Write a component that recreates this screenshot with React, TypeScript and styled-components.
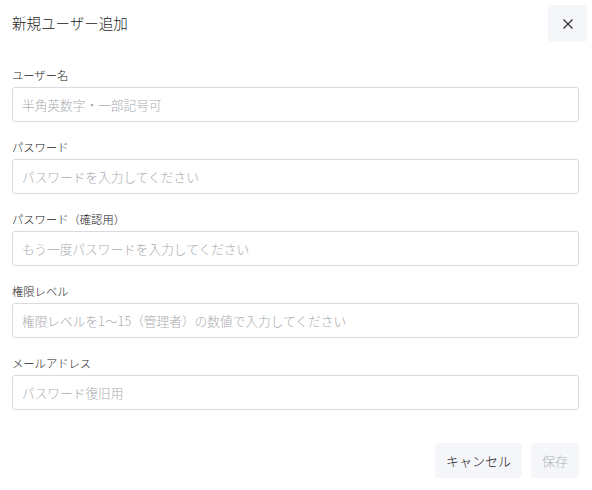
import styled, { createGlobalStyle } from "styled-components";

const GlobalStyle = createGlobalStyle`
  body {
    margin: 0;
    background: #ffffff;
    font-family: "Noto Sans CJK JP", "Noto Sans", sans-serif;
    font-weight: 300;
    color: #222;
  }
`;

const fields = [
  { label: "ユーザー名", placeholder: "半角英数字・一部記号可" },
  { label: "パスワード", placeholder: "パスワードを入力してください" },
  { label: "パスワード（確認用）", placeholder: "もう一度パスワードを入力してください" },
  { label: "権限レベル", placeholder: "権限レベルを1～15（管理者）の数値で入力してください" },
  { label: "メールアドレス", placeholder: "パスワード復旧用" },
];

export default function App() {
  return (
    <>
      <GlobalStyle />
      <Dialog>
        <Header>
          <Title>新規ユーザー追加</Title>
          <CloseButton aria-label="close">
            <svg width="12" height="12" viewBox="0 0 12 12">
              <path d="M1.5 1.5 L10.5 10.5 M10.5 1.5 L1.5 10.5" stroke="#333" strokeWidth="1.3" />
            </svg>
          </CloseButton>
        </Header>
        <Form>
          {fields.map((f) => (
            <Field key={f.label}>
              <Label>{f.label}</Label>
              <Input placeholder={f.placeholder} />
            </Field>
          ))}
        </Form>
        <Footer>
          <Button>キャンセル</Button>
          <Button disabled>保存</Button>
        </Footer>
      </Dialog>
    </>
  );
}

const Dialog = styled.div`
  width: 592px;
  height: 490px;
  box-sizing: border-box;
  padding: 5px 13px 0 12px;
  display: flex;
  flex-direction: column;
`;

const Header = styled.div`
  display: flex;
  justify-content: space-between;
  align-items: center;
  height: 37px;
  padding-right: 5px;
  margin-right: -13px;
`;

const Title = styled.h2`
  margin: 0 0 3px;
  font-size: 14.5px;
  font-weight: 300;
  color: #222;
`;

const CloseButton = styled.button`
  width: 39px;
  height: 37px;
  border: none;
  border-radius: 4px;
  background: #f4f6f9;
  display: flex;
  align-items: center;
  justify-content: center;
  padding: 0;
`;

const Form = styled.div`
  display: flex;
  flex-direction: column;
  gap: 17px;
  margin-top: 25px;
`;

const Field = styled.div`
  display: flex;
  flex-direction: column;
  gap: 4px;
`;

const Label = styled.label`
  font-size: 11.3px;
  line-height: 16px;
  color: #222;
`;

const Input = styled.input`
  height: 35px;
  box-sizing: border-box;
  border: 1px solid #d7dbe0;
  border-radius: 3px;
  padding: 0 9px;
  font-family: inherit;
  font-weight: 300;
  font-size: 12.7px;
  color: #222;
  &::placeholder {
    color: #a8abb0;
  }
`;

const Footer = styled.div`
  display: flex;
  justify-content: flex-end;
  gap: 9px;
  margin-top: 33px;
`;

const Button = styled.button`
  height: 35px;
  padding: 0 11px;
  border: none;
  border-radius: 4px;
  background: #f4f6f9;
  font-family: inherit;
  font-weight: 300;
  font-size: 13px;
  color: #222;
  &:disabled {
    color: #b0b3b8;
  }
`;
